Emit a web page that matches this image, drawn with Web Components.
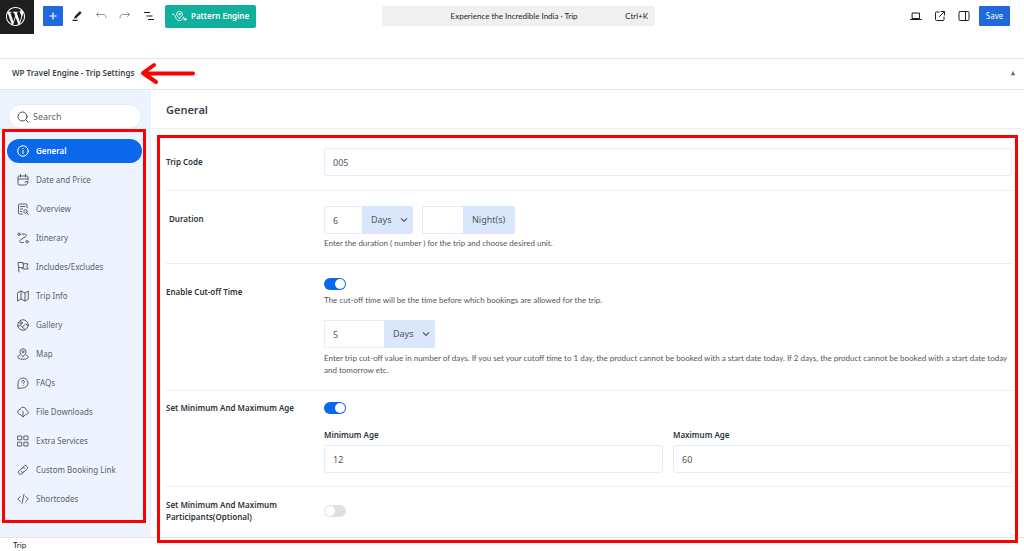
<!DOCTYPE html>
<html lang="en">
<head>
<meta charset="utf-8">
<title>Experience the Incredible India · Trip</title>
<style>
  body { margin: 0; background: #fff; color: #3c434a; font-family: "Noto Sans", "Open Sans", sans-serif; font-size: 8px; line-height: 12px; --small-font: Lato, "Noto Sans", sans-serif; }
</style>
</head>
<body>
<trip-editor></trip-editor>
<script>
const line = (body) => `<svg viewBox="0 0 24 24" fill="none" stroke="currentColor" stroke-width="2" stroke-linecap="round" stroke-linejoin="round" aria-hidden="true">${body}</svg>`;
const ICONS = {
  wordpress: `<svg viewBox="0 0 24 24" fill="currentColor" aria-hidden="true"><path d="M21.469 6.825c.84 1.537 1.318 3.3 1.318 5.175 0 3.979-2.156 7.456-5.363 9.325l3.295-9.527c.615-1.54.82-2.771.82-3.864 0-.405-.026-.78-.07-1.11m-7.981.105c.647-.03 1.232-.105 1.232-.105.582-.075.514-.93-.067-.899 0 0-1.755.135-2.88.135-1.064 0-2.85-.15-2.85-.15-.585-.03-.661.855-.075.885 0 0 .54.061 1.125.09l1.68 4.605-2.37 7.08L5.354 6.9c.649-.03 1.234-.1 1.234-.1.585-.075.516-.93-.065-.896 0 0-1.746.138-2.874.138-.2 0-.438-.008-.69-.015C4.911 3.15 8.235 1.215 12 1.215c2.809 0 5.365 1.072 7.286 2.833-.046-.003-.091-.009-.141-.009-1.06 0-1.812.923-1.812 1.914 0 .89.513 1.643 1.06 2.531.411.72.89 1.643.89 2.977 0 .915-.354 1.994-.821 3.479l-1.075 3.585-3.9-11.61.001.014zM12 22.784c-1.059 0-2.081-.153-3.048-.437l3.237-9.406 3.315 9.087c.024.053.05.101.078.149-1.12.393-2.325.609-3.582.609M1.211 12c0-1.564.336-3.05.935-4.39L7.29 21.709C3.694 19.96 1.212 16.271 1.211 12M12 0C5.385 0 0 5.385 0 12s5.385 12 12 12 12-5.385 12-12S18.615 0 12 0"/></svg>`,
  plus: line('<path d="M12 5v14M5 12h14" stroke-width="2.4" stroke-linecap="butt"/>'),
  pencil: '<svg viewBox="0 0 24 24" fill="currentColor" aria-hidden="true"><path d="M20.5 4.8 18.6 3c-.5-.4-1.200-.4-1.600.1L7.6 12.6 6 17.5l4.900-1.500L20.500 6.500c.5-.5.5-1.200 0-1.700zM3 19.500h10V22H3z"/></svg>',
  undo: line('<path d="m7 5-4 4 4 4M3 9h13c4 0 6 2 6 7"/>'),
  redo: line('<path d="m17 5 4 4-4 4M21 9H8c-4 0-6 2-6 7"/>'),
  outline: line('<path d="M2 5h12M7 12h12M10 19h12" stroke-width="2.4" stroke-linecap="butt"/>'),
  pattern: '<svg viewBox="0 0 32 24" fill="none" stroke="currentColor" stroke-width="2" stroke-linecap="round" stroke-linejoin="round" aria-hidden="true"><path d="M16 17c-4-4-6-6-6-9a6 6 0 0 1 12 0c0 3-2 5-6 9z"/><circle cx="16" cy="8" r="1.500"/><path d="M1 8c3 0 5 2 6 5 2 6 5 9 9 9 5 0 8-4 9-8"/><circle cx="28" cy="19" r="2"/></svg>',
  laptop: line('<path d="M5 6h14v11H5zM1 19h22"/>'),
  external: line('<path d="M10 4H5a2 2 0 0 0-2 2v13a2 2 0 0 0 2 2h13a2 2 0 0 0 2-2v-5M14 3h7v7M20.500 3.500 11 13"/>'),
  panel: line('<rect x="2" y="3" width="20" height="18" rx="2"/><path d="M15 3v18"/>'),
  triangle: '<svg viewBox="0 0 8 8" fill="currentColor" aria-hidden="true"><path d="M4 1 7 7H1z"/></svg>',
  arrow: '<svg viewBox="0 0 56 24" fill="none" stroke="#f00" stroke-width="4" stroke-linecap="round" stroke-linejoin="round" aria-hidden="true"><path d="M53 12.500H6M14 4 3 12l13 9"/></svg>',
  search: line('<circle cx="11" cy="11" r="9"/><path d="m17.500 17.500 5 5"/>'),
  chevron: line('<path d="m4 8 8 8 8-8" stroke-width="3.500"/>'),
  info: line('<circle cx="12" cy="12" r="10.500"/><path d="M12 11v6M12 7v.5"/>'),
  calendar: line('<path d="M22 12V6a2 2 0 0 0-2-2H4a2 2 0 0 0-2 2v14a2 2 0 0 0 2 2h11c4 0 7-3 7-7h-4a2 2 0 0 0-2 2M2 10h20M7 1v5M17 1v5"/>'),
  overview: line('<path d="M20 10V4a2 2 0 0 0-2-2H5a2 2 0 0 0-2 2v16a2 2 0 0 0 2 2h6M7 7h9M7 12h4M7 17h2"/><circle cx="17" cy="17" r="3.500"/><path d="m20 20 3 3"/>'),
  route: line('<circle cx="4" cy="4.500" r="2.500"/><circle cx="20" cy="19.500" r="2.500"/><path d="M10 4h5c4 0 5 3 2 5.500L7 15.500C4 18 5 21 8.500 21H13"/>'),
  flag: line('<path d="M4 22 2 3h10l1.500 10H3.500M12 5.500h10L19.500 11l3 5H11l-2-3"/>'),
  map: line('<path d="M1.500 5.500 8 2l8 4 6.500-4v16.500L16 22l-8-4-6.500 4zM8 2v16M16 6v16"/>'),
  gallery: line('<circle cx="12" cy="12" r="10.500"/><circle cx="8" cy="8" r="2.500"/><path d="m2 14 5-1 9 8M11 16l6-6 5 3"/>'),
  pin: line('<path d="M12 17C8 13 6 11 6 7.500a6 6 0 0 1 12 0C18 11 16 13 12 17z"/><circle cx="12" cy="7.500" r="2"/><path d="M6 14c-3 1-4.500 2.500-4.500 4 0 2.500 4 4.500 10.500 4.500s10.500-2 10.500-4.500c0-1.500-1.500-3-4.500-4"/>'),
  faq: line('<path d="M2 22V12A10 10 0 1 1 12 22zM9.500 9.500a2.700 2.700 0 1 1 3.500 2.600c-.7.300-1 .7-1 1.400M12 17v.3"/>'),
  download: line('<path d="M7 17.500C3.500 17.500 1.500 15 1.500 12S3.500 7.500 6 7c1-3 3.500-4.500 6-4.500 3.500 0 6 2 6.500 5.500 2.500.5 4 2.500 4 4.500 0 3-2 5-5.500 5M12 11v11M8.500 18.500 12 22l3.500-3.500"/>'),
  grid: line('<path d="M2 2h7.500v7.500H2zM14.500 2H22v7.500h-7.500zM2 14.500h7.500V22H2zM14.500 14.500H22V22h-7.500z"/>'),
  link: line('<path d="M10 8.500 14 4.500a4.200 4.200 0 0 1 6 6l-6 5a4 4 0 0 1-5.500 0M14 15.500l-4 4a4.200 4.200 0 0 1-6-6l6-5a4 4 0 0 1 5.500 0"/>'),
  code: line('<path d="m6.500 7-5 5 5 5M17.500 7l5 5-5 5M14 3l-4 18"/>')
};

function define(name, css, html) {
  const template = document.createElement('template');
  customElements.define(name, class extends HTMLElement {
    constructor() {
      super();
      template.innerHTML = `<style>*{box-sizing:border-box}button,input,select{font:inherit;color:inherit;margin:0}${css}</style>${typeof html === 'function' ? html(this) : html}`;
      this.attachShadow({ mode: 'open' }).append(template.content.cloneNode(true));
    }
  });
}

customElements.define('ui-icon', class extends HTMLElement {
  connectedCallback() {
    if (this.shadowRoot) return;
    this.attachShadow({ mode: 'open' }).innerHTML =
      `<style>:host{display:block;flex:none;width:12px;height:12px}svg{display:block;width:100%;height:100%}</style>${ICONS[this.getAttribute('name')] || ''}`;
  }
});

define('tool-button', `
  :host { display: block; color: #1e1e1e; }
  button { display: grid; place-items: center; width: 24px; height: 20px; padding: 0; border: 0; background: none; }
  :host([primary]) button { width: 20px; background: #2068db; color: #fff; border-radius: 1px; }
  :host([muted]) { color: #949494; }
`, (el) => `<button type="button" aria-label="${el.getAttribute('label')}"><slot></slot></button>`);

define('editor-header', `
  :host { display: flex; align-items: flex-start; padding-bottom: 24px; }
  .logo { display: grid; place-items: center; flex: none; width: 34px; height: 34px; padding: 0 3px 2px 0; background: #1e1e1e; color: #fff; }
  .logo ui-icon { width: 19px; height: 19px; }
  .bar { flex: 1; display: grid; grid-template-columns: 1fr 280px 1fr; align-items: center; height: 32px; padding-right: 14px; }
  .group { display: flex; align-items: center; }
  .start { padding-left: 9px; }
  .end { justify-content: flex-end; }
  .start tool-button[primary] { margin-right: 2px; }
  .pattern { display: flex; align-items: center; gap: 4px; height: 23px; margin-left: 4px; padding: 0 7px; border: 0; border-radius: 2px; background: #11b09c; color: #fff; font-weight: 600; white-space: nowrap; }
  .pattern ui-icon { width: 15px; height: 12px; }
  .command { display: grid; grid-template-columns: 1fr auto; align-items: center; height: 20px; margin-right: 7px; padding: 0 7px 0 21px; border: 0; border-radius: 2px; background: #f0f0f0; color: #1e1e1e; font-family: var(--small-font); }
  .save { height: 20px; width: 31px; margin-left: 3px; padding: 0; border: 0; border-radius: 1px; background: #2068db; color: #fff; }
`, `
  <a class="logo" href="#" aria-label="View posts"><ui-icon name="wordpress"></ui-icon></a>
  <div class="bar">
    <div class="group start">
      <tool-button primary label="Add block"><ui-icon name="plus"></ui-icon></tool-button>
      <tool-button label="Tools"><ui-icon name="pencil"></ui-icon></tool-button>
      <tool-button muted label="Undo"><ui-icon name="undo"></ui-icon></tool-button>
      <tool-button muted label="Redo"><ui-icon name="redo"></ui-icon></tool-button>
      <tool-button label="Document overview"><ui-icon name="outline"></ui-icon></tool-button>
      <button class="pattern" type="button"><ui-icon name="pattern"></ui-icon>Pattern Engine</button>
    </div>
    <button class="command" type="button"><span>Experience the Incredible India · Trip</span><span>Ctrl+K</span></button>
    <div class="group end">
      <tool-button label="View"><ui-icon name="laptop"></ui-icon></tool-button>
      <tool-button label="Open in new tab"><ui-icon name="external"></ui-icon></tool-button>
      <tool-button label="Settings"><ui-icon name="panel"></ui-icon></tool-button>
      <button class="save" type="button">Save</button>
    </div>
  </div>
`);

define('panel-title', `
  :host { display: flex; align-items: center; gap: 6px; height: 32px; padding: 0 7px 2px 12px; border: solid #e4e6e8; border-width: 1px 0; }
  h2 { margin: 0; font-size: 8px; font-weight: 600; line-height: 12px; color: #3c434a; }
  .arrow { width: 56px; height: 24px; }
  button { display: grid; place-items: center; width: 8px; height: 12px; margin-left: auto; padding: 0; border: 0; background: none; color: #6c7278; }
  button ui-icon { width: 6px; height: 6px; }
`, `
  <h2><slot></slot></h2>
  <ui-icon class="arrow" name="arrow"></ui-icon>
  <button type="button" aria-label="Toggle panel"><ui-icon name="triangle"></ui-icon></button>
`);

define('nav-item', `
  :host { display: block; color: #5a6067; }
  a { display: flex; align-items: center; gap: 7px; height: 24px; padding: 0 10px; border-radius: 12px; color: inherit; text-decoration: none; white-space: nowrap; }
  :host([active]) a { background: #0c68ea; color: #fff; font-weight: 600; }
`, (el) => `<a href="#"><ui-icon name="${el.getAttribute('icon')}"></ui-icon><slot></slot></a>`);

const NAV = [['info', 'General'], ['calendar', 'Date and Price'], ['overview', 'Overview'], ['route', 'Itinerary'], ['flag', 'Includes/Excludes'], ['map', 'Trip Info'], ['gallery', 'Gallery'], ['pin', 'Map'], ['faq', 'FAQs'], ['download', 'File Downloads'], ['grid', 'Extra Services'], ['link', 'Custom Booking Link'], ['code', 'Shortcodes']];

define('settings-nav', `
  :host { display: block; background: #eef4ff; padding: 14px 9px 24px 7px; }
  label { display: flex; align-items: center; gap: 4px; height: 25px; margin-bottom: 10px; margin-left: 1px; padding: 0 8px; border: 1px solid #e0eafb; border-radius: 13px; background: #fff; color: #4a5157; }
  input { flex: 1; min-width: 0; padding: 0; border: 0; outline: 0; background: none; font-size: 9px; }
  input::placeholder { color: #5f666d; opacity: 1; }
  nav { position: relative; display: grid; gap: 5px; }
  nav::after { content: ""; position: absolute; inset: -10px -4px -12px -5px; border: 3px solid #f00; pointer-events: none; }
`, `
  <label><ui-icon name="search"></ui-icon><input type="search" placeholder="Search" aria-label="Search"></label>
  <nav aria-label="Trip settings">${NAV.map(([icon, text], i) => `<nav-item icon="${icon}"${i ? '' : ' active'}>${text}</nav-item>`).join('')}</nav>
`);

define('field-row', `
  :host { display: grid; grid-template-columns: 146px minmax(0, 1fr); column-gap: 12px; border-bottom: 1px solid #eceef0; }
  :host(:last-of-type) { border-bottom: 0; }
`, `<slot name="label"></slot><div><slot></slot></div>`);

define('settings-form', `
  :host { display: block; }
  h3 { display: flex; align-items: center; height: 39px; margin: 0; padding: 2px 14px 0; border-bottom: 1px solid #eceef0; font-size: 11px; font-weight: 600; color: #3c434a; }
  form { position: relative; margin: 0; padding: 6px 12px 0 14px; }
  form::after { content: ""; position: absolute; z-index: 1; inset: 6px 6px -6px 5px; border: 3px solid #f00; pointer-events: none; }
  label { font-weight: 600; color: #2c3338; }
  p { margin: 0; font-family: var(--small-font); color: #50575e; }
  input[type=text], input[type=number] { display: block; width: 100%; height: 28px; padding: 0 8px; border: 1px solid #e3edfd; border-radius: 2px; background: #fff; font-size: 9px; color: #50575e; appearance: textfield; outline: 0; }
  .toggle { appearance: none; display: block; width: 22px; height: 12px; padding: 1px; border-radius: 6px; background: #e0e0e0; }
  .toggle::before { content: ""; display: block; width: 10px; height: 10px; border-radius: 50%; background: #fff; }
  .toggle:checked { background: #0c68ea; }
  .toggle:checked::before { margin-left: auto; }
  .line { display: flex; gap: 9px; }
  .group { display: flex; }
  .group input { border-radius: 2px 0 0 2px; border-right: 0; }
  .unit { display: flex; align-items: center; position: relative; height: 28px; border-radius: 0 2px 2px 0; background: #d9e6fc; font-size: 9px; color: #50575e; }
  span.unit { padding: 0 10px 0 9px; }
  .unit select { appearance: none; width: 51px; height: 28px; padding: 0 9px; border: 0; background: none; outline: 0; }
  .unit ui-icon { position: absolute; right: 5px; width: 8px; height: 8px; pointer-events: none; }
  .short input { width: 38px; }
  .medium input { width: 41px; }
  .long input { width: 60px; }
  .pair { display: grid; grid-template-columns: 1fr 1fr; gap: 10px; margin-top: 15px; }
  .pair label { display: block; margin-bottom: 4px; }
  .code { padding: 13px 0 14px; }
  .duration { padding: 15px 0 14px; }
  .cutoff { padding: 14px 0 14px; }
  .age { padding: 11px 0 13px; }
  .people { padding: 12px 0 14px; align-items: center; }
  .code label, .cutoff label { padding-top: 8px; }
  .duration label { padding: 7px 0 0 3px; }
  .duration p { margin-top: 3px; }
  .cutoff .toggle { margin-bottom: 4px; }
  .cutoff .group { margin: 14px 0 4px; }
`, `
  <h3>General</h3>
  <form>
    <field-row class="code">
      <label slot="label" for="code">Trip Code</label>
      <input id="code" type="text" value="005">
    </field-row>
    <field-row class="duration">
      <label slot="label" for="days">Duration</label>
      <div class="line">
        <div class="group short"><input id="days" type="number" value="6"><div class="unit"><select aria-label="Duration unit"><option>Days</option><option>Hours</option></select><ui-icon name="chevron"></ui-icon></div></div>
        <div class="group medium"><input type="number" aria-label="Nights"><span class="unit">Night(s)</span></div>
      </div>
      <p>Enter the duration ( number ) for the trip and choose desired unit.</p>
    </field-row>
    <field-row class="cutoff">
      <label slot="label" for="cutoff">Enable Cut-off Time</label>
      <input class="toggle" id="cutoff" type="checkbox" checked>
      <p>The cut-off time will be the time before which bookings are allowed for the trip.</p>
      <div class="group long"><input type="number" value="5" aria-label="Cut-off value"><div class="unit"><select aria-label="Cut-off unit"><option>Days</option><option>Hours</option></select><ui-icon name="chevron"></ui-icon></div></div>
      <p>Enter trip cut-off value in number of days. If you set your cutoff time to 1 day, the product cannot be booked with a start date today. If 2 days, the product cannot be booked with a start date today and tomorrow etc.</p>
    </field-row>
    <field-row class="age">
      <label slot="label" for="age">Set Minimum And Maximum Age</label>
      <input class="toggle" id="age" type="checkbox" checked>
      <div class="pair">
        <div><label for="min">Minimum Age</label><input id="min" type="number" value="12"></div>
        <div><label for="max">Maximum Age</label><input id="max" type="number" value="60"></div>
      </div>
    </field-row>
    <field-row class="people">
      <label slot="label" for="people">Set Minimum And Maximum Participants(Optional)</label>
      <input class="toggle" id="people" type="checkbox">
    </field-row>
  </form>
`);

define('trip-editor', `
  :host { display: block; }
  main { display: grid; grid-template-columns: 151px minmax(0, 1fr); border-bottom: 1px solid #e4e6e8; }
  settings-form { padding-left: 1px; }
  footer { padding: 1px 13px 0; font-family: var(--small-font); color: #1e1e1e; }
`, `
  <editor-header></editor-header>
  <panel-title>WP Travel Engine - Trip Settings</panel-title>
  <main>
    <settings-nav></settings-nav>
    <settings-form></settings-form>
  </main>
  <footer>Trip</footer>
`);
</script>
</body>
</html>
